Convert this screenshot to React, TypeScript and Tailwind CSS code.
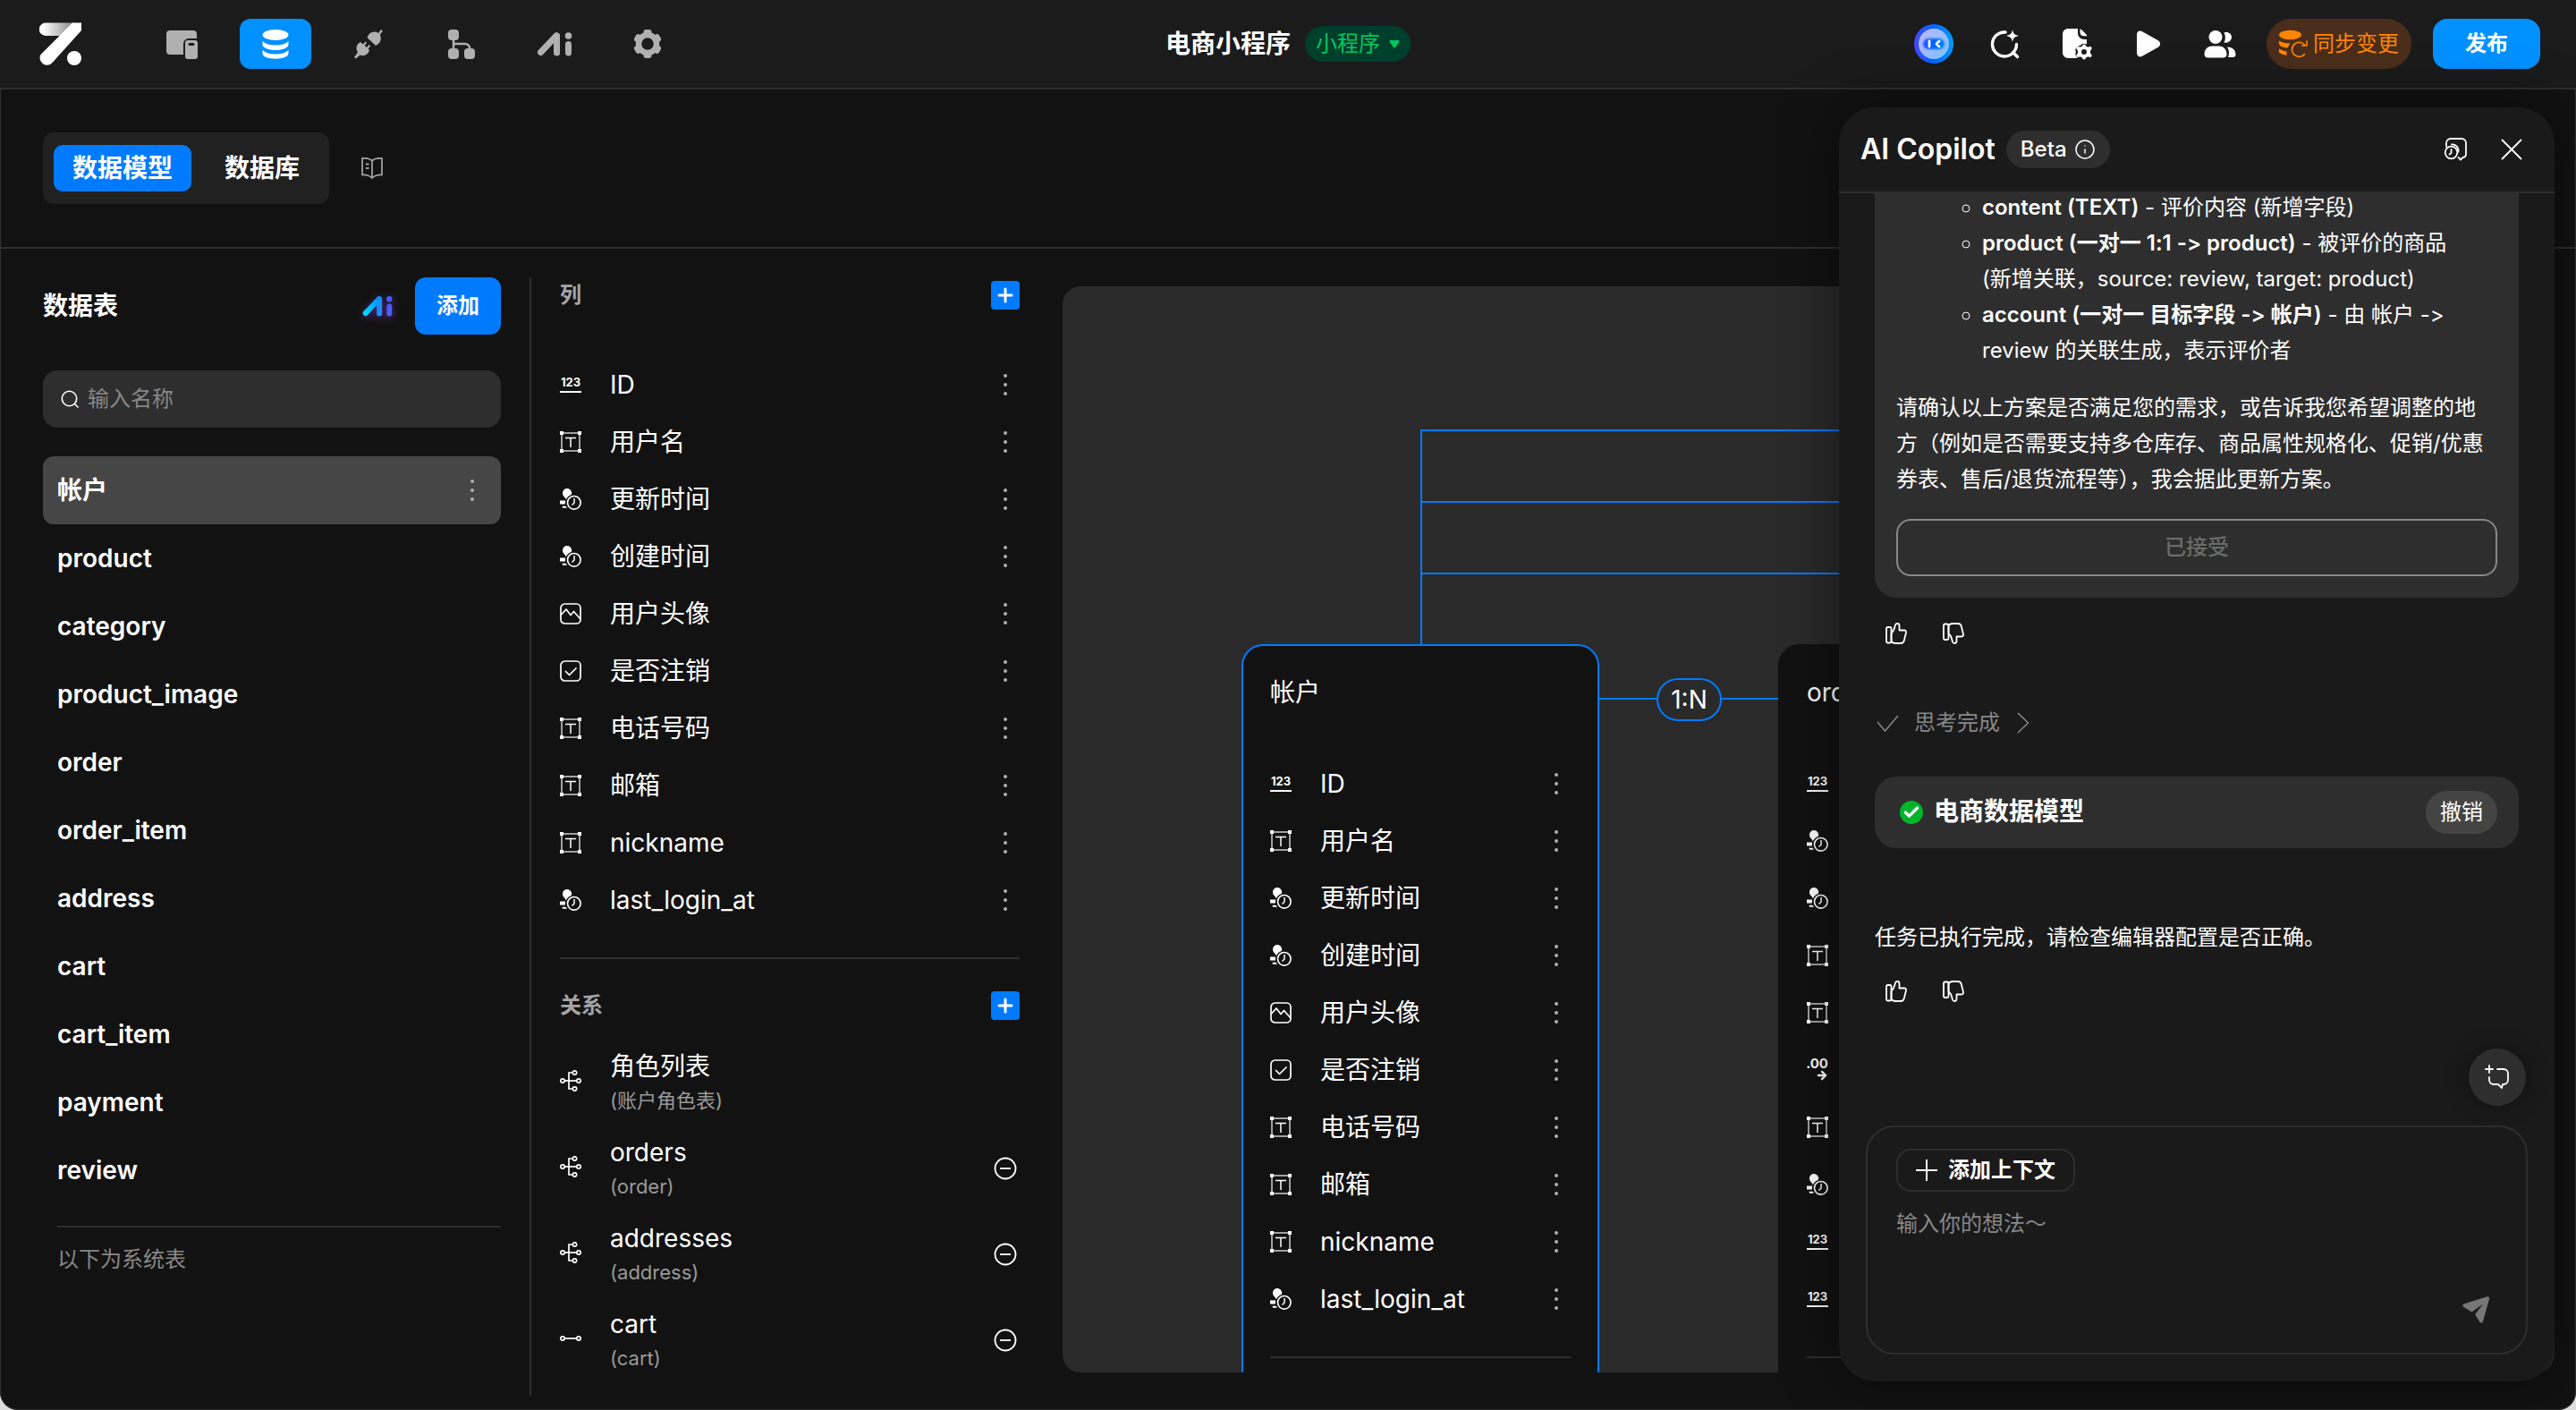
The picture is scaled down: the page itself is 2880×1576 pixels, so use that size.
import React from 'react'
import { ArrowRight, Check, Info, Plus } from 'lucide-react'

type FieldType = 'number' | 'text' | 'time' | 'image' | 'boolean' | 'decimal'

const tables = [
  '帐户',
  'product',
  'category',
  'product_image',
  'order',
  'order_item',
  'address',
  'cart',
  'cart_item',
  'payment',
  'review',
]

const accountFields: { name: string; type: FieldType }[] = [
  { name: 'ID', type: 'number' },
  { name: '用户名', type: 'text' },
  { name: '更新时间', type: 'time' },
  { name: '创建时间', type: 'time' },
  { name: '用户头像', type: 'image' },
  { name: '是否注销', type: 'boolean' },
  { name: '电话号码', type: 'text' },
  { name: '邮箱', type: 'text' },
  { name: 'nickname', type: 'text' },
  { name: 'last_login_at', type: 'time' },
]

const orderFieldTypes: FieldType[] = [
  'number', 'time', 'time', 'text', 'text', 'decimal', 'text', 'time', 'number', 'number',
]

const relations = [
  { name: '角色列表', target: '账户角色表', many: true, removable: false },
  { name: 'orders', target: 'order', many: true, removable: true },
  { name: 'addresses', target: 'address', many: true, removable: true },
  { name: 'cart', target: 'cart', many: false, removable: true },
]

/* ---------- Icons ---------- */

function Logo() {
  return (
    <svg viewBox="0 0 48 48" className="size-12" fill="none">
      <defs>
        <linearGradient id="logo-bar" x1="0" y1="0" x2="38" y2="0" gradientUnits="userSpaceOnUse">
          <stop offset="0.1" stopColor="#fff" />
          <stop offset="1" stopColor="#8a8a8a" />
        </linearGradient>
      </defs>
      <path d="M7 0.500h34L31 15H7A7.200 7.200 0 0 1 7 0.500z" fill="url(#logo-bar)" />
      <path d="M37 0.500h10v8.500L15 44.500A8 8 0 0 1 1.500 36z" fill="#fff" />
      <circle cx="39" cy="40" r="8" fill="#fff" />
    </svg>
  )
}

function PagesIcon() {
  return (
    <svg viewBox="0 0 36 36" className="size-9" fill="currentColor">
      <path d="M4 3h26a4 4 0 0 1 4 4v5h-9a6 6 0 0 0-6 6v12H4a4 4 0 0 1-4-4V7a4 4 0 0 1 4-4z" />
      <path fillRule="evenodd" d="M24 14h8a3 3 0 0 1 3 3v15a3 3 0 0 1-3 3h-8a3 3 0 0 1-3-3V17a3 3 0 0 1 3-3zm2 3a1 1 0 0 0 0 3h4a1 1 0 0 0 0-3z" />
    </svg>
  )
}

function DatabaseIcon() {
  return (
    <svg viewBox="0 0 36 36" className="size-9" fill="currentColor">
      <ellipse cx="18" cy="8" rx="14.500" ry="6" />
      <path d="M3.500 15c3 3 8 4.500 14.500 4.500S29.500 18 32.500 15v3.500C32.500 22.500 26 25 18 25S3.500 22.500 3.500 18.500z" />
      <path d="M3.500 25c3 3 8 4.500 14.500 4.500S29.500 28 32.500 25v3.500c0 4-6.500 6.200-14.500 6.200S3.500 32.500 3.500 28.500z" />
    </svg>
  )
}

function PlugIcon() {
  return (
    <svg viewBox="0 0 36 36" className="size-9" fill="currentColor">
      <path d="M18 8a8 8 0 0 1 11-2l3-4 1.800 1.800-3 4A8 8 0 0 1 29 18l-3 2L16.500 11z" />
      <path d="M9 16l3 2.500 2.500-3 1.600 1.300-2.400 3.100 2.300 2.100 2.500-3 1.700 1.400-2.600 3 1.400 1.600a7.500 7.500 0 0 1-10.500 5.500L4 34.500 2 33l4-5.500A7.500 7.500 0 0 1 9 16z" />
    </svg>
  )
}

function FlowIcon() {
  return (
    <svg viewBox="0 0 36 36" className="size-9" fill="currentColor">
      <rect x="3" y="2" width="12" height="12" rx="4" />
      <rect x="3" y="23" width="12" height="12" rx="4" />
      <rect x="21" y="23" width="12" height="12" rx="4" />
      <path d="M9 12v12M9 18h13a5 5 0 0 1 5 5v2" stroke="currentColor" strokeWidth="2.500" fill="none" />
    </svg>
  )
}

function AiMark({ className, gradient }: { className: string; gradient?: boolean }) {
  const slash = gradient ? 'url(#ai-slash)' : 'currentColor'
  const stem = gradient ? '#1a8cff' : 'currentColor'
  const side = gradient ? '#4a5cff' : 'currentColor'
  return (
    <svg viewBox="0 0 40 28" className={className} fill="none" strokeLinecap="round" strokeWidth="7">
      <defs>
        <linearGradient id="ai-slash" x1="4" y1="24" x2="22" y2="4" gradientUnits="userSpaceOnUse">
          <stop stopColor="#00d5ff" />
          <stop offset="1" stopColor="#0091ff" />
        </linearGradient>
      </defs>
      <path d="M22.500 5v19" stroke={stem} />
      <path d="M4.500 23.500L22 5" stroke={slash} />
      <path d="M35.500 14.500V24" stroke={side} />
      <circle cx="35.500" cy="5" r="3.800" fill={side} />
    </svg>
  )
}

function GearIcon() {
  return (
    <svg viewBox="0 0 36 36" className="size-9" fill="none" stroke="currentColor" strokeLinecap="round">
      <circle cx="18" cy="18" r="10" strokeWidth="6.500" />
      <path d="M16.500 5h3M16.500 31h3M28.500 10.200l1.500 2.600M6 23.200l1.500 2.600M30 23.200l-1.500 2.600M7.500 10.200L6 12.800" strokeWidth="6" />
    </svg>
  )
}

function GuideIcon() {
  return (
    <svg viewBox="0 0 24 24" className="size-6" fill="none" stroke="currentColor" strokeWidth="1.800" strokeLinejoin="round">
      <path d="M12 3.500C9 1 5 .500 1 1v18.500c4-.3 7.500.3 11 3.500 3.500-3.200 7-3.800 11-3.500V1c-4-.5-8 0-11 2.500zM12 3.500V23" />
      <path d="M5 7.500h3.500M5 12h3.500" />
    </svg>
  )
}

function RobotAvatar() {
  return (
    <svg viewBox="0 0 44 44" className="size-11">
      <defs>
        <linearGradient id="robot-ring" x1="0" y1="0" x2="44" y2="0" gradientUnits="userSpaceOnUse">
          <stop stopColor="#4a46ff" />
          <stop offset="0.5" stopColor="#0066ff" />
          <stop offset="1" stopColor="#009dff" />
        </linearGradient>
        <linearGradient id="robot-face" x1="6" y1="6" x2="38" y2="38" gradientUnits="userSpaceOnUse">
          <stop stopColor="#b9b6ff" />
          <stop offset="1" stopColor="#7fc4ff" />
        </linearGradient>
        <filter id="robot-blur" x="-20%" y="-30%" width="140%" height="160%">
          <feGaussianBlur stdDeviation="1.200" />
        </filter>
      </defs>
      <circle cx="22" cy="22" r="22" fill="url(#robot-ring)" />
      <circle cx="22" cy="22" r="17" fill="url(#robot-face)" />
      <rect x="10" y="16" width="24" height="12" rx="6" fill="url(#robot-ring)" filter="url(#robot-blur)" />
      <path d="M17 19v6M28 19l-3 3 3 3" stroke="#fff" strokeWidth="2.800" strokeLinecap="round" strokeLinejoin="round" fill="none" />
    </svg>
  )
}

function SparkSearchIcon() {
  return (
    <svg viewBox="0 0 36 36" className="size-9" fill="none" stroke="currentColor" strokeWidth="3.400" strokeLinecap="round">
      <path d="M18 5A13.500 13.500 0 1 0 30.500 18.500M26.500 27.500l5 5" />
      <path d="M26 2c.8 4.500 2.200 6 7 7-4.800 1-6.200 2.500-7 7-.8-4.500-2.200-6-7-7 4.800-1 6.200-2.500 7-7z" fill="currentColor" stroke="none" />
    </svg>
  )
}

function FileSettingsIcon() {
  return (
    <svg viewBox="0 0 36 36" className="size-9" fill="currentColor">
      <path d="M8 1h11v5a7 7 0 0 0 7 7h3v5.500c-3-1.500-6-.8-7 1.500-4 0-7 4-5 7-1.500 3 .5 5 1.500 7H8a6 6 0 0 1-6-6V7a6 6 0 0 1 6-6z" />
      <path d="M21.500 1.500c1 0 1.500.5 2 1l5 5c.5.500.8 1 .8 1.700h-3.500a4.500 4.500 0 0 1-4.300-4.300z" />
      <path
        fillRule="evenodd"
        d="M24 20.500a2 2 0 0 1 4 0l2.500 1.300 1.800-.8a2 2 0 0 1 1.500 3.600l-.8 1.200v2.400l.8 1.200a2 2 0 0 1-1.500 3.600l-1.800-.8-2.500 1.300a2 2 0 0 1-4 0l-2.500-1.300-1.800.8a2 2 0 0 1-1.500-3.600l.8-1.200v-2.400l-.8-1.200a2 2 0 0 1 1.500-3.600l1.800.8zm2 3.500a3 3 0 1 0 0 6 3 3 0 0 0 0-6z"
      />
    </svg>
  )
}

function PlayIcon() {
  return (
    <svg viewBox="0 0 36 36" className="size-9" fill="currentColor">
      <path d="M5 8c0-4 3-5.500 6.500-3.500l17 9.500c3.500 2 3.500 6 0 8l-17 9.500C8 33.500 5 32 5 28z" />
    </svg>
  )
}

function MembersIcon() {
  return (
    <svg viewBox="0 0 36 36" className="size-9" fill="currentColor">
      <circle cx="13" cy="10.500" r="7.500" />
      <path d="M9 20.500h8c5 0 8.500 4 8.500 9 0 2.500-1.500 4-4 4h-17c-2.500 0-4-1.500-4-4 0-5 3.500-9 8.500-9z" />
      <path d="M22.500 16.500a12 12 0 0 0 0-11C27 4 31 7 31 10.500s-3.500 7-8.500 6zM26 21.500c5.500 0 9.500 3 9.500 8.500 0 2-1.200 3-3 3H27c1.500-3.500 1.500-8-1-11.500z" />
    </svg>
  )
}

function SyncDataIcon() {
  return (
    <svg viewBox="0 0 36 36" className="size-9" fill="currentColor">
      <ellipse cx="14.500" cy="8" rx="12.500" ry="5.200" />
      <path d="M2 14.500c3 2 7 3 12.500 3l-3 5C6 22 2 20.500 2 17.500zM2 23.500c2.500 1.500 5 2.500 8.500 2.800v4.500C5 30 2 28.500 2 26.500z" />
      <path d="M31.500 20.500A8 8 0 1 0 31 29M27 20h6v-5.500" fill="none" stroke="currentColor" strokeWidth="1.600" />
    </svg>
  )
}

function SearchIcon() {
  return (
    <svg viewBox="0 0 20 20" className="size-5" fill="none" stroke="currentColor" strokeWidth="1.600" strokeLinecap="round">
      <circle cx="9.500" cy="9.500" r="8.200" />
      <path d="M15.500 15.500l3.500 3.500" />
    </svg>
  )
}

function HistoryIcon() {
  return (
    <svg viewBox="0 0 28 28" className="size-7" fill="none" stroke="currentColor" strokeWidth="1.800" strokeLinecap="round" strokeLinejoin="round">
      <path d="M3 11V7a5 5 0 0 1 5-5h12a5 5 0 0 1 5 5v12a4 4 0 0 1-3.500 4L19 25.500 16.500 23" />
      <circle cx="8.500" cy="17.500" r="6.800" />
      <path d="M8.500 14v4l-2 1.500M9 8.500c4-.5 8 3 7.500 8" />
    </svg>
  )
}

function CloseIcon() {
  return (
    <svg viewBox="0 0 24 24" className="size-6" fill="none" stroke="currentColor" strokeWidth="1.800" strokeLinecap="round">
      <path d="M1.500 1.500l21 21M22.500 1.500l-21 21" />
    </svg>
  )
}

function ThumbUpIcon() {
  return (
    <svg viewBox="0 0 24 24" className="size-6" fill="none" stroke="currentColor" strokeWidth="1.800" strokeLinejoin="round">
      <rect x="1" y="5" width="5.500" height="17.500" rx="1.500" />
      <path d="M6.500 12c3.500-3 3.500-6 4.500-9.500C12 .200 15.500.500 15.500 3.500v5H21c1.500 0 2.300 1 2 2.500l-2.200 9c-.5 2-1.800 3-3.800 3h-6c-2 0-3.500-1-4.500-2z" />
    </svg>
  )
}

function ThumbDownIcon() {
  return (
    <svg viewBox="0 0 24 24" className="size-6" fill="none" stroke="currentColor" strokeWidth="1.800" strokeLinejoin="round">
      <rect x="1" y="1.500" width="5.500" height="17.500" rx="1.500" />
      <path d="M6.500 12c3.500 3 3.500 6 4.500 9.500 1 2.300 4.500 2 4.500-1v-5H21c1.500 0 2.300-1 2-2.500l-2.200-9c-.5-2-1.800-3-3.800-3h-6c-2 0-3.500 1-4.500 2z" />
    </svg>
  )
}

function NewChatIcon() {
  return (
    <svg viewBox="0 0 28 28" className="size-7" fill="none" stroke="currentColor" strokeWidth="1.800" strokeLinecap="round" strokeLinejoin="round">
      <path d="M5 1v8M1 5h8M14 5h7a5 5 0 0 1 5 5v7a5 5 0 0 1-5 5h-1l-1 4-4-4h-5a5 5 0 0 1-5-5v-3" />
    </svg>
  )
}

function SendIcon() {
  return (
    <svg viewBox="0 0 32 32" className="size-8" fill="currentColor">
      <path d="M28 1.500c2-.8 3.500.5 3 2.500l-7 25c-.6 2-2.800 2.200-3.800.500l-5-8.500L24 9.500l-12.500 9-9-5.500C.800 12 1 9.800 3 9.200z" />
    </svg>
  )
}

function FieldIcon({ type }: { type: FieldType }) {
  switch (type) {
    case 'number':
      return (
        <span className="w-6 border-b-2 border-current pb-1 text-center text-[13px] leading-3 font-bold">123</span>
      )
    case 'decimal':
      return (
        <span className="flex w-6 flex-col items-end text-[15px] leading-3 font-bold">
          .00
          <ArrowRight className="size-3.5" strokeWidth={4} />
        </span>
      )
    case 'text':
      return (
        <svg viewBox="0 0 24 24" className="size-6" fill="none" stroke="currentColor" strokeWidth="1.500">
          <rect x="2" y="2" width="20" height="20" opacity="0.8" />
          <path d="M6 7.500h12M12 7.500V18" />
          <path d="M0 0h4v4H0zM20 0h4v4h-4zM0 20h4v4H0zM20 20h4v4h-4z" fill="currentColor" stroke="none" />
        </svg>
      )
    case 'time':
      return (
        <svg viewBox="0 0 24 24" className="size-6">
          <path
            d="M8 0a5 5 0 0 1 5.200 5c0 .7-.2 1.300-.5 1.900C10 7.800 8 9.700 6.900 12.200L5.500 10C3.800 8.500 3 7 3 5a5 5 0 0 1 5-5zM0 13.500h6.200a9 9 0 0 0-.2 4H0zM2.500 19.800h4l1.500 2H3z"
            fill="currentColor"
          />
          <circle cx="15.800" cy="15.800" r="7.300" fill="none" stroke="currentColor" strokeWidth="1.600" />
          <path d="M16 11v5l-2.500 2.500" fill="none" stroke="currentColor" strokeWidth="1.500" />
        </svg>
      )
    case 'image':
      return (
        <svg viewBox="0 0 24 24" className="size-6" fill="none" stroke="currentColor" strokeWidth="1.700" strokeLinejoin="round">
          <rect x="1" y="1" width="22" height="22" rx="4.500" />
          <path d="M1 13.500L7 7l5 6.500 3.500-4L23 18" />
        </svg>
      )
    case 'boolean':
      return (
        <svg viewBox="0 0 24 24" className="size-6" fill="none" stroke="currentColor" strokeWidth="1.700" strokeLinejoin="round">
          <rect x="1" y="1" width="22" height="22" rx="4.500" />
          <path d="M6 12l4.500 4.500L18.500 8.500" />
        </svg>
      )
  }
}

function RelationIcon({ many }: { many: boolean }) {
  return (
    <svg viewBox="0 0 24 24" className="size-6" fill="none" stroke="currentColor" strokeWidth="1.700">
      <circle cx="3" cy="12" r="2.200" />
      <circle cx="21" cy="12" r="2.200" />
      <path d="M5.200 12h13.600" />
      {many && (
        <>
          <circle cx="16.500" cy="3" r="2.200" />
          <circle cx="16.500" cy="21" r="2.200" />
          <path d="M14.300 3H10v18h4.300" />
        </>
      )}
    </svg>
  )
}

function DotsIcon() {
  return (
    <svg viewBox="0 0 32 32" className="size-8" fill="#b0b0b0">
      <circle cx="16" cy="6" r="2" />
      <circle cx="16" cy="16" r="2" />
      <circle cx="16" cy="26" r="2" />
    </svg>
  )
}

function MinusCircleIcon() {
  return (
    <svg viewBox="0 0 32 32" className="size-8" fill="none" stroke="currentColor" strokeWidth="1.800">
      <circle cx="16" cy="16" r="11.500" />
      <path d="M10 16h12" />
    </svg>
  )
}

/* ---------- Header ---------- */

const navItems = [
  { name: '页面', icon: <PagesIcon /> },
  { name: '数据', icon: <DatabaseIcon />, active: true },
  { name: '集成', icon: <PlugIcon /> },
  { name: '行为流', icon: <FlowIcon /> },
  { name: 'AI', icon: <AiMark className="h-7 w-10" /> },
  { name: '设置', icon: <GearIcon /> },
]

const actions = [
  { name: '助手', icon: <RobotAvatar /> },
  { name: '搜索', icon: <SparkSearchIcon /> },
  { name: '文件设置', icon: <FileSettingsIcon /> },
  { name: '预览', icon: <PlayIcon /> },
  { name: '成员', icon: <MembersIcon /> },
]

function Header() {
  return (
    <header className="relative flex h-[100px] shrink-0 items-center justify-between border-b-2 border-[#2e2e2e] bg-[#1b1b1b] pr-10 pl-11">
      <div className="flex items-center gap-[72px]">
        <a href="#" aria-label="首页">
          <Logo />
        </a>
        <nav className="flex gap-6">
          {navItems.map((item) => (
            <button
              key={item.name}
              aria-label={item.name}
              className={`flex h-14 w-20 items-center justify-center rounded-xl ${
                item.active ? 'bg-[#0091ff] text-white' : 'text-[#b0b0b0]'
              }`}
            >
              {item.icon}
            </button>
          ))}
        </nav>
      </div>

      <div className="absolute inset-x-0 mx-auto flex w-fit items-center gap-4">
        <h1 className="text-[28px] font-semibold">电商小程序</h1>
        <button className="flex h-10 items-center gap-2.5 rounded-full bg-[#003f2b] px-3 text-2xl text-[#00c663]">
          小程序
          <svg viewBox="0 0 12 10" className="h-2.5 w-3" fill="currentColor">
            <path d="M1.500 1h9c1 0 1.500.8 1 1.600L7.500 8.500c-.7 1.100-2.300 1.100-3 0L.500 2.600C0 1.800.500 1 1.500 1z" />
          </svg>
        </button>
      </div>

      <div className="flex items-center gap-6">
        <div className="flex items-center">
          {actions.map((action) => (
            <button key={action.name} aria-label={action.name} className="flex w-20 items-center justify-center">
              {action.icon}
            </button>
          ))}
          <button className="ml-3 flex h-14 items-center gap-1 rounded-full bg-[#4a2e1b] pr-3.5 pl-3 text-2xl text-[#ff8500]">
            <SyncDataIcon />
            同步变更
          </button>
        </div>
        <button className="h-14 w-[120px] rounded-2xl bg-[#0091ff] text-2xl font-semibold">发布</button>
      </div>
    </header>
  )
}

/* ---------- Left panels ---------- */

function TableSidebar() {
  return (
    <aside className="w-[594px] shrink-0 border-r-2 border-[#2e2e2e] pr-8 pl-12">
      <div className="flex items-center justify-between">
        <h2 className="text-[28px] font-semibold">数据表</h2>
        <div className="flex items-center gap-6">
          <button aria-label="AI">
            <AiMark gradient className="h-6 w-9 drop-shadow-[0_2px_4px_#a03cff80]" />
          </button>
          <button className="h-16 rounded-xl bg-[#007bff] px-6 text-2xl font-semibold">添加</button>
        </div>
      </div>

      <label className="mt-10 flex h-16 items-center gap-2.5 rounded-2xl bg-[#2e2e2e] px-5">
        <SearchIcon />
        <input
          aria-label="输入名称"
          placeholder="输入名称"
          className="min-w-0 flex-1 bg-transparent text-2xl outline-none placeholder:text-[#888]"
        />
      </label>

      <ul className="mt-8">
        {tables.map((table, index) => (
          <li
            key={table}
            className={`flex h-[76px] items-center justify-between rounded-xl px-4 text-[28px] font-semibold ${
              index === 0 ? 'bg-[#464646]' : ''
            }`}
          >
            {table}
            {index === 0 && (
              <button aria-label="更多">
                <DotsIcon />
              </button>
            )}
          </li>
        ))}
      </ul>
      <p className="mt-6 ml-4 border-t-2 border-[#2e2e2e] pt-4 text-2xl leading-10 text-[#888]">以下为系统表</p>
    </aside>
  )
}

function PanelHeading({ title }: { title: string }) {
  return (
    <div className="flex h-10 items-center justify-between">
      <h3 className="text-2xl font-semibold text-[#a5a5a5]">{title}</h3>
      <button aria-label={`添加${title}`} className="flex size-8 items-center justify-center rounded bg-[#007bff]">
        <Plus className="size-6" strokeWidth={3} />
      </button>
    </div>
  )
}

function FieldRow({ name, type }: { name: string; type: FieldType }) {
  return (
    <li className="flex h-16 items-center gap-8 text-[28px]">
      <FieldIcon type={type} />
      <span className="flex-1">{name}</span>
      <button aria-label="更多">
        <DotsIcon />
      </button>
    </li>
  )
}

function ColumnPanel() {
  return (
    <section className="w-[594px] shrink-0 overflow-hidden pr-12 pl-8">
      <PanelHeading title="列" />
      <ul className="mt-12">
        {accountFields.map((field) => (
          <FieldRow key={field.name} name={field.name} type={field.type} />
        ))}
      </ul>
      <hr className="my-8 border-t-2 border-[#2e2e2e]" />
      <PanelHeading title="关系" />
      <ul className="mt-4">
        {relations.map((relation) => (
          <li key={relation.name} className="flex h-24 items-center gap-8">
            <RelationIcon many={relation.many} />
            <div className="flex-1 pt-1">
              <p className="text-[28px] leading-10">{relation.name}</p>
              <p className="text-[22px] leading-9 text-[#999]">({relation.target})</p>
            </div>
            {relation.removable && (
              <button aria-label="删除" className="pt-1">
                <MinusCircleIcon />
              </button>
            )}
          </li>
        ))}
      </ul>
    </section>
  )
}

/* ---------- Diagram ---------- */

function Diagram() {
  return (
    <section className="relative mt-2.5 mr-6 mb-6.5 flex-1 overflow-hidden rounded-[20px] bg-[#2a2a2a]">
      <svg className="absolute inset-0 size-full" fill="none" stroke="#007bff" strokeWidth="2">
        <path d="M401 400V161H2000M401 241H2000M401 321H2000M600 461H800" />
      </svg>

      <article className="absolute top-[400px] left-[200px] h-[1200px] w-[400px] rounded-3xl border-2 border-[#007bff] bg-[#121212] px-[30px] pt-8">
        <h3 className="text-[28px] leading-10">帐户</h3>
        <ul className="mt-[50px]">
          {accountFields.map((field) => (
            <FieldRow key={field.name} name={field.name} type={field.type} />
          ))}
        </ul>
        <hr className="mt-8 border-t-2 border-[#2e2e2e]" />
      </article>

      <span className="absolute top-[438px] left-[664px] flex h-12 w-[73px] items-center justify-center rounded-full border-2 border-[#007bff] bg-[#2a2a2a] text-[28px]">
        1:N
      </span>

      <article className="absolute top-[400px] left-[800px] h-[1200px] w-[400px] rounded-3xl border-2 border-[#121212] bg-[#121212] px-[30px] pt-8">
        <h3 className="text-[28px] leading-10">order</h3>
        <ul className="mt-[50px]">
          {orderFieldTypes.map((type, index) => (
            <li key={index} className="flex h-16 items-center">
              <FieldIcon type={type} />
            </li>
          ))}
        </ul>
        <hr className="mt-8 border-t-2 border-[#2e2e2e]" />
      </article>
    </section>
  )
}

/* ---------- Copilot ---------- */

function Feedback() {
  return (
    <div className="mt-7 flex gap-10 px-3">
      <button aria-label="赞">
        <ThumbUpIcon />
      </button>
      <button aria-label="踩">
        <ThumbDownIcon />
      </button>
    </div>
  )
}

function Copilot() {
  return (
    <aside className="absolute top-[120px] right-6 bottom-8 flex w-[800px] flex-col overflow-hidden rounded-[40px] bg-[#1a1a1a] shadow-[0_0_60px_rgba(0,0,0,0.5)]">
      <div className="flex h-24 shrink-0 items-center border-b-2 border-[#2e2e2e] pr-9 pl-6">
        <h2 className="text-[32px] font-semibold">AI Copilot</h2>
        <span className="ml-3 flex h-[42px] items-center gap-2 rounded-full bg-[#2e2e2e] px-4 text-2xl font-medium">
          Beta
          <Info className="size-6" strokeWidth={1.500} />
        </span>
        <button aria-label="历史记录" className="mr-9 ml-auto">
          <HistoryIcon />
        </button>
        <button aria-label="关闭">
          <CloseIcon />
        </button>
      </div>

      <div className="flex min-h-0 flex-1 flex-col justify-end overflow-hidden px-10 pb-[138px] text-2xl">
        <div className="rounded-b-3xl bg-[#2e2e2e] px-6 pb-6 leading-10">
          <ul className="list-[circle] pl-24 [font-feature-settings:'calt'_0]">
            <li>
              <strong className="font-semibold">content (TEXT)</strong> - 评价内容 (新增字段)
            </li>
            <li>
              <strong className="font-semibold">product (一对一 1:1 -&gt; product)</strong> - 被评价的商品
              <br />
              (新增关联，source: review, target: product)
            </li>
            <li>
              <strong className="font-semibold">account (一对一 目标字段 -&gt; 帐户)</strong> - 由 帐户 -&gt;
              <br />
              review 的关联生成，表示评价者
            </li>
          </ul>
          <p className="mt-6">
            请确认以上方案是否满足您的需求，或告诉我您希望调整的地
            <br />
            方（例如是否需要支持多仓库存、商品属性规格化、促销/优惠
            <br />
            券表、售后/退货流程等），我会据此更新方案。
          </p>
          <button disabled className="mt-6 h-16 w-full rounded-2xl border-2 border-[#888] font-medium text-[#6b6b6b]">
            已接受
          </button>
        </div>
        <Feedback />

        <button className="mt-[68px] flex h-10 shrink-0 items-center gap-4 text-[#888]">
          <svg viewBox="0 0 28 24" className="h-6 w-7" fill="none" stroke="currentColor" strokeWidth="1.500">
            <path d="M3 11l8.500 10L26 4" />
          </svg>
          思考完成
          <svg viewBox="0 0 20 24" className="h-6 w-5" fill="none" stroke="currentColor" strokeWidth="1.500">
            <path d="M4 1l11.500 11L4 23" />
          </svg>
        </button>

        <div className="mt-10 flex h-20 shrink-0 items-center gap-3 rounded-3xl bg-[#2e2e2e] pr-6 pl-7">
          <span className="flex size-6.5 items-center justify-center rounded-full bg-[#00b42a]">
            <Check className="size-5" strokeWidth={4} />
          </span>
          <h3 className="flex-1 text-[28px] font-semibold">电商数据模型</h3>
          <button className="h-12 rounded-full bg-[#444] px-4">撤销</button>
        </div>

        <p className="mt-20 leading-10">任务已执行完成，请检查编辑器配置是否正确。</p>
        <Feedback />
      </div>

      <button
        aria-label="新对话"
        className="absolute right-8 bottom-[308px] flex size-16 items-center justify-center rounded-full bg-[#2e2e2e] shadow-[0_0_24px_rgba(0,0,0,0.4)]"
      >
        <NewChatIcon />
      </button>

      <form className="mx-[30px] mb-[30px] flex h-64 shrink-0 flex-col rounded-[32px] border-2 border-[#2e2e2e] px-8 pt-6 pb-8 text-2xl">
        <button type="button" className="flex h-12 items-center gap-3 self-start rounded-2xl border-2 border-[#2e2e2e] px-5 font-semibold">
          <svg viewBox="0 0 24 24" className="size-6" fill="none" stroke="currentColor" strokeWidth="2">
            <path d="M12 0v24M0 12h24" />
          </svg>
          添加上下文
        </button>
        <textarea
          aria-label="输入你的想法"
          placeholder="输入你的想法～"
          className="mt-4 min-h-0 flex-1 resize-none bg-transparent leading-10 outline-none placeholder:text-[#888]"
        />
        <button type="submit" aria-label="发送" className="mr-2 self-end text-[#777]">
          <SendIcon />
        </button>
      </form>
    </aside>
  )
}

export default function App() {
  return (
    <div className="h-screen bg-[#dcdcdc] font-['Inter','Noto_Sans_CJK_SC',sans-serif] text-white">
      <div className="relative flex h-full flex-col overflow-hidden rounded-b-[20px] bg-[#121212] outline-1 -outline-offset-1 outline-[#333]">
        <Header />
        <div className="flex shrink-0 items-center gap-9 border-b-2 border-[#2e2e2e] px-12 py-12">
          <div className="flex h-20 items-center gap-4 rounded-xl bg-[#212121] px-3 text-[28px] font-semibold">
            <button className="h-13 rounded-[10px] bg-[#007bff] px-[21px]">数据模型</button>
            <button className="h-13 px-[21px]">数据库</button>
          </div>
          <button aria-label="使用指南" className="text-[#a0a0a0]">
            <GuideIcon />
          </button>
        </div>
        <main className="flex min-h-0 flex-1 pt-8 pb-4">
          <TableSidebar />
          <ColumnPanel />
          <Diagram />
        </main>
        <Copilot />
      </div>
    </div>
  )
}
